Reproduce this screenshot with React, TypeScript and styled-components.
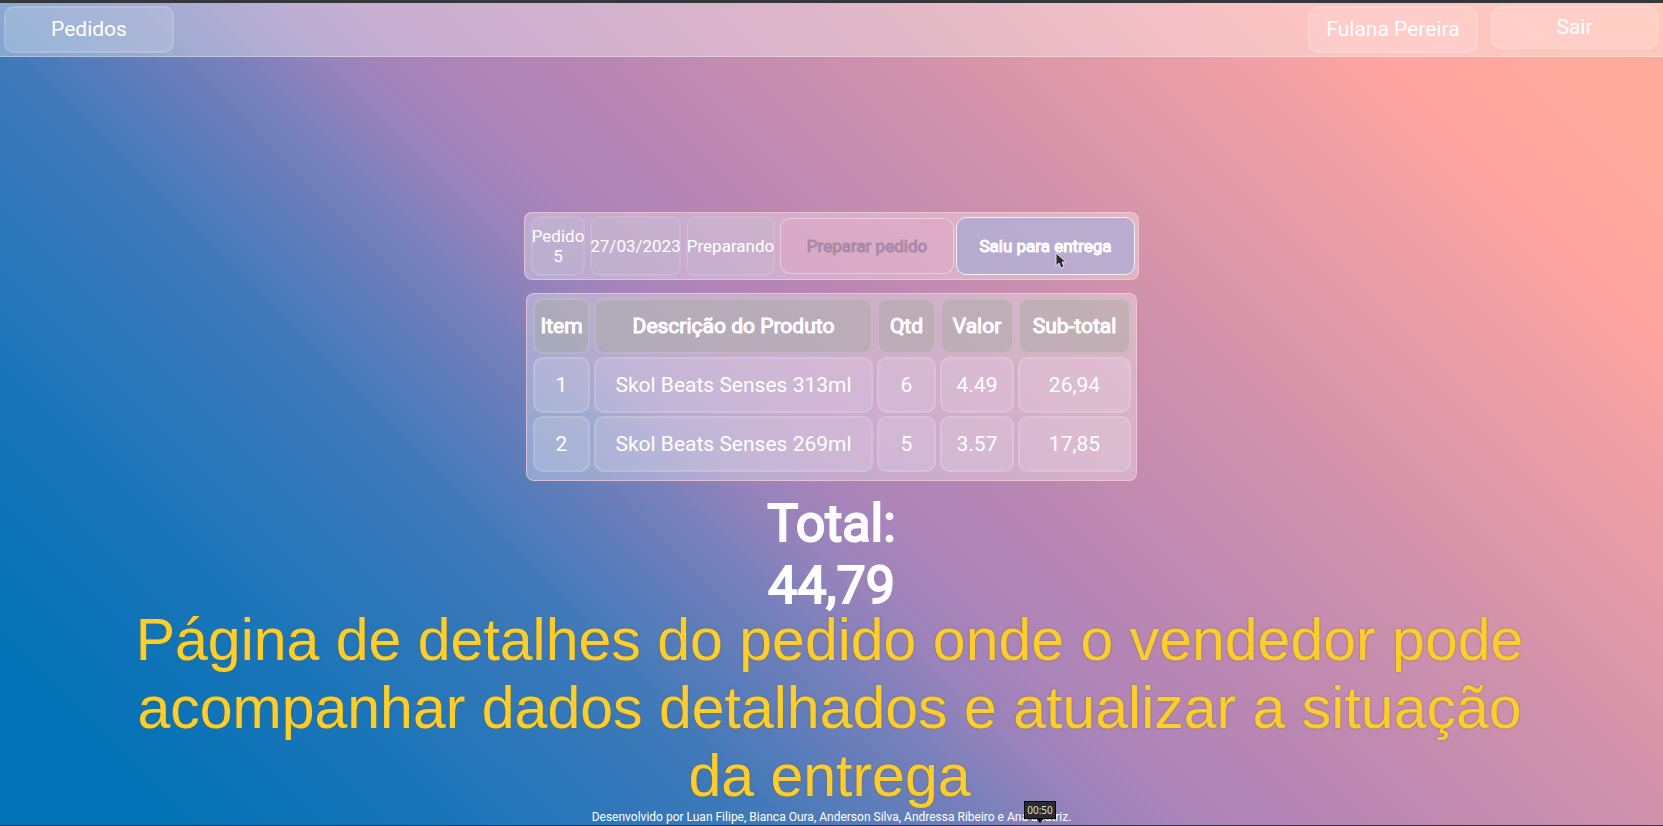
import React from "react";
import styled, { createGlobalStyle, css } from "styled-components";

const GlobalStyle = createGlobalStyle`
  *, *::before, *::after { box-sizing: border-box; }
  body {
    margin: 0;
    font-family: Roboto, "Liberation Sans", sans-serif;
    color: #fff;
  }
  button { font: inherit; color: inherit; cursor: pointer; }
`;

const glass = css`
  background: rgba(255, 255, 255, 0.14);
  border: 2px solid rgba(255, 255, 255, 0.14);
  border-radius: 10px;
`;

const panel = css`
  background: rgba(255, 255, 255, 0.32);
  border: 1px solid rgba(255, 205, 215, 0.65);
  border-radius: 8px;
`;

const Page = styled.div`
  position: relative;
  min-height: 100vh;
  display: flex;
  flex-direction: column;
  border-top: 3px solid #34373b;
  border-bottom: 1px solid #2c3440;
  background: linear-gradient(
    45deg,
    #0072b5 6%,
    #1c75b9 19%,
    #4079b9 31%,
    #7880bb 40%,
    #9883bb 44%,
    #ab84b9 48%,
    #b886b4 54%,
    #d092ab 67%,
    #ee9fa6 80%,
    #ffa5a0 87%,
    #ffac99 100%
  );
  overflow: hidden;
`;

const Header = styled.header`
  display: flex;
  align-items: flex-start;
  height: 54px;
  padding: 3px 5px 0 4px;
  background: rgba(255, 255, 255, 0.35);
  border-bottom: 1px solid rgba(255, 255, 255, 0.3);
`;

const NavButton = styled.button<{ $compact?: boolean }>`
  ${glass}
  width: ${({ $compact }) => ($compact ? 167 : 170)}px;
  height: ${({ $compact }) => ($compact ? 43 : 47)}px;
  padding: 0 0 2px;
  font-size: 21px;
  line-height: 24px;
`;

const UserNav = styled.nav`
  display: flex;
  gap: 13px;
  margin-left: auto;
`;

const Main = styled.main`
  flex: 1;
  display: flex;
  flex-direction: column;
  align-items: center;
  padding-top: 155px;
`;

const OrderBar = styled.section`
  ${panel}
  display: flex;
  align-items: center;
  gap: 5px;
  height: 68px;
  padding: 0 3px 0 6px;
  font-size: 17px;
  line-height: 20px;
`;

const Info = styled.div<{ $width: number }>`
  ${glass}
  background: rgba(190, 190, 205, 0.22);
  border-color: rgba(255, 255, 255, 0.1);
  display: flex;
  align-items: center;
  justify-content: center;
  width: ${({ $width }) => $width}px;
  height: 60px;
  text-align: center;
`;

const Actions = styled.div`
  display: flex;
  align-items: center;
  gap: 2px;
`;

const ActionButton = styled.button<{ $active?: boolean }>`
  width: ${({ $active }) => ($active ? 179 : 174)}px;
  height: ${({ $active }) => ($active ? 58 : 56)}px;
  padding: 0;
  -webkit-text-stroke: 1px currentColor;
  border-radius: 10px;
  border: 1px solid ${({ $active }) => ($active ? "#f4effa" : "rgba(255, 225, 240, 0.6)")};
  background: ${({ $active }) => ($active ? "rgba(165, 168, 212, 0.65)" : "rgba(226, 165, 195, 0.5)")};

  &:disabled {
    color: #a98aa6;
    cursor: default;
  }
`;

const ItemsCard = styled.section`
  ${panel}
  margin-top: 13px;
  padding: 1px 1px 5px 2px;
`;

const Table = styled.table`
  border-collapse: separate;
  border-spacing: 4px 3px;
  font-size: 21px;
  line-height: 24px;
`;

const HeadCell = styled.th<{ $width: number }>`
  ${glass}
  background: rgba(165, 170, 160, 0.45);
  width: ${({ $width }) => $width}px;
  height: 56px;
  padding: 0;
  font-weight: 400;
  -webkit-text-stroke: 1px currentColor;
`;

const Cell = styled.td`
  ${glass}
  height: 56px;
  padding: 0;
  text-align: center;
`;

const Total = styled.h1`
  margin: 12px 0 0;
  width: 140px;
  font-size: 52px;
  line-height: 62px;
  font-weight: 400;
  -webkit-text-stroke: 2px currentColor;
  text-align: center;
`;

const Footer = styled.footer`
  padding-bottom: 1px;
  font-size: 12px;
  line-height: 14px;
  text-align: center;
`;

const Caption = styled.p`
  position: absolute;
  left: 0;
  right: 0;
  bottom: 15px;
  margin: 0;
  padding: 0 132px 0 128px;
  font-family: "Liberation Sans", Arial, sans-serif;
  font-size: 59px;
  line-height: 68px;
  text-align: center;
  color: #fccd2c;
  text-shadow: 0 0 2px rgba(110, 110, 40, 0.8);
  pointer-events: none;
`;

const TimeTip = styled.div`
  position: absolute;
  left: 1024px;
  bottom: 6px;
  width: 32px;
  height: 18px;
  border: 1px solid #000;
  background: #2c2c2c;
  color: #dcdcdc;
  font: 10px/16px "Noto Sans", sans-serif;
  text-align: center;

  &::after {
    content: "";
    position: absolute;
    top: 100%;
    left: 50%;
    margin-left: -4px;
    border: 4px solid transparent;
    border-top: 5px solid #000;
    border-bottom: 0;
  }
`;

const Pointer = styled.svg`
  position: absolute;
  left: 1055px;
  top: 249px;
  pointer-events: none;
`;

const columns = [
  { label: "Item", width: 57 },
  { label: "Descrição do Produto", width: 279 },
  { label: "Qtd", width: 59 },
  { label: "Valor", width: 74 },
  { label: "Sub-total", width: 113 },
];

const rows = [
  ["1", "Skol Beats Senses 313ml", "6", "4.49", "26,94"],
  ["2", "Skol Beats Senses 269ml", "5", "3.57", "17,85"],
];

export default function App() {
  return (
    <Page>
      <GlobalStyle />
      <Header>
        <NavButton>Pedidos</NavButton>
        <UserNav>
          <NavButton>Fulana Pereira</NavButton>
          <NavButton $compact>Sair</NavButton>
        </UserNav>
      </Header>

      <Main>
        <OrderBar>
          <Info $width={54}>
            Pedido
            <br />5
          </Info>
          <Info $width={91}>27/03/2023</Info>
          <Info $width={89}>Preparando</Info>
          <Actions>
            <ActionButton disabled>Preparar pedido</ActionButton>
            <ActionButton $active>Saiu para entrega</ActionButton>
          </Actions>
        </OrderBar>

        <ItemsCard>
          <Table>
            <thead>
              <tr>
                {columns.map((c) => (
                  <HeadCell key={c.label} $width={c.width} scope="col">
                    {c.label}
                  </HeadCell>
                ))}
              </tr>
            </thead>
            <tbody>
              {rows.map((row) => (
                <tr key={row[0]}>
                  {row.map((value, i) => (
                    <Cell key={i}>{value}</Cell>
                  ))}
                </tr>
              ))}
            </tbody>
          </Table>
        </ItemsCard>

        <Total>Total: 44,79</Total>
      </Main>

      <Footer>
        Desenvolvido por Luan Filipe, Bianca Oura, Anderson Silva, Andressa Ribeiro e Ana Beatriz.
      </Footer>

      <Caption>
        Página de detalhes do pedido onde o vendedor pode acompanhar dados detalhados e atualizar a
        situação da entrega
      </Caption>
      <TimeTip>00:50</TimeTip>
      <Pointer width="12" height="17" viewBox="0 0 12 17" aria-hidden="true">
        <path
          d="M1 1v13l3-3 2 5 3-1-2-5h4z"
          fill="#2b2733"
          stroke="#e8e0ee"
          strokeWidth="1"
          strokeLinejoin="round"
        />
      </Pointer>
    </Page>
  );
}
